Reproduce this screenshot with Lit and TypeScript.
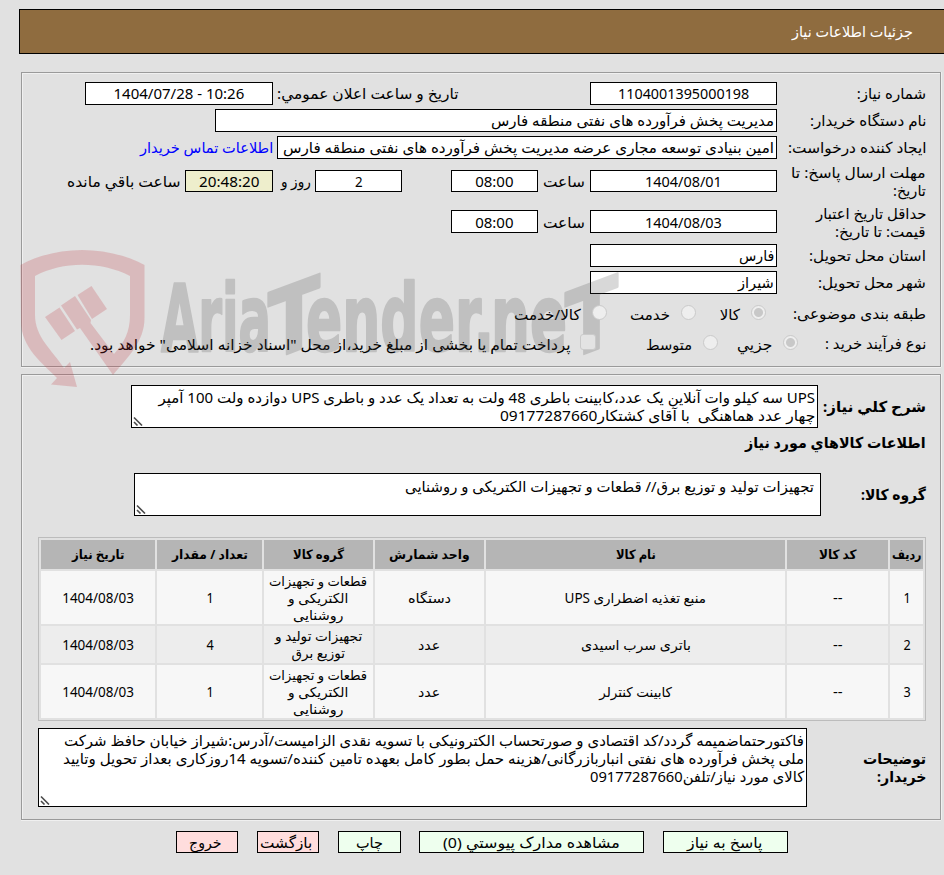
import { LitElement, html, css, svg } from "lit";
import { customElement, property, query } from "lit/decorators.js";

/** A single line of text whose advance is condensed or widened to a set measure. */
@customElement("fit-text")
class FitText extends LitElement {
  @property({ type: Number }) w = 0;
  @query("span") run!: HTMLSpanElement;

  static styles = css`
    :host {
      display: block;
      flex: none;
      white-space: pre;
      overflow: visible;
    }
    span {
      display: inline-block;
      transform-origin: 100% 50%;
    }
  `;

  updated() {
    const natural = this.run.offsetWidth;
    this.style.width = `${this.w}px`;
    if (natural) this.run.style.transform = `scaleX(${this.w / natural})`;
  }

  render() {
    return html`<span><slot></slot></span>`;
  }
}

const t = (w: number, text: string) => html`<fit-text w=${w}>${text}</fit-text>`;

interface Item {
  no: string;
  name: [number, string];
  unit: [number, string];
  group: [number, string][];
  qty: string;
}

const partsGroup: [number, string][] = [
  [98, "قطعات و تجهیزات"],
  [60, "الکتریکی و"],
  [51, "روشنایی"],
];

const items: Item[] = [
  { no: "1", name: [141, "منبع تغذیه اضطراری UPS"], unit: [43, "دستگاه"], group: partsGroup, qty: "1" },
  {
    no: "2",
    name: [110, "باتری سرب اسیدی"],
    unit: [22, "عدد"],
    group: [
      [87, "تجهیزات تولید و"],
      [53, "توزیع برق"],
    ],
    qty: "4",
  },
  { no: "3", name: [73, "کابینت کنترلر"], unit: [22, "عدد"], group: partsGroup, qty: "1" },
];

const headers: [number, string][] = [
  [30, "ردیف"],
  [38, "کد کالا"],
  [40, "نام کالا"],
  [81, "واحد شمارش"],
  [51, "گروه کالا"],
  [76, "تعداد / مقدار"],
  [52, "تاریخ نیاز"],
];

const grip = html`<svg class="grip" viewBox="0 0 10 10">
  <path d="M1 1.5 L9 9.5 M1 6 L4.5 9.5" />
</svg>`;

const watermark = svg`
  <g fill="#c0303c" fill-opacity=".22">
    <path fill-rule="evenodd" d="M20.5 265 C57 245 107 245 144.5 265 V318 C144.500 342 127 358 113 375
      L80 328 L77 329.500 L61 305.500 L75 296 L91 320 L90.500 323 L114 354 C124 343 130 332 130 315
      V276 C101 261 63 261 35 276 V315 C35 337 52 350 64 368 L70 362 L77 387 L51 384.500 L57 378
      C43 364 21 347 21 322 Z"/>
    <path d="M45 317 L59.500 307.500 L75 331 L61.500 340 Z"/>
    <path d="M77.500 295 L91.500 286 L107 309 L92 319 Z"/>
  </g>
  <g class="word">
    <text x="161" y="351" textLength="110" lengthAdjust="spacingAndGlyphs">Aria</text>
    <text transform="translate(268 361) skewY(-20.500)" textLength="52" lengthAdjust="spacingAndGlyphs">T</text>
    <text x="306" y="351" textLength="188" lengthAdjust="spacingAndGlyphs">ender.</text>
    <text x="491" y="351" textLength="76" lengthAdjust="spacingAndGlyphs">ne</text>
    <text transform="translate(565 361) skewY(-20.500)" textLength="53" lengthAdjust="spacingAndGlyphs">T</text>
  </g>`;

@customElement("app-root")
class AppRoot extends LitElement {
  static styles = css`
    :host {
      display: block;
      position: relative;
      box-sizing: border-box;
      width: 944px;
      height: 875px;
      overflow: hidden;
      background: #e1e1e1;
      color: #000;
      direction: rtl;
      font: 15px/18px "Noto Sans", "DejaVu Sans", sans-serif;
      padding: 9px 0 0;
    }
    * {
      box-sizing: border-box;
    }
    .title {
      display: flex;
      align-items: center;
      height: 45px;
      margin-left: 19px;
      padding: 0 31px 2px 0;
      background: #8f6c3f;
      border: 1px solid #000;
      border-right: 0;
      color: #fff;
    }
    .panel {
      width: 920px;
      margin-right: 3px;
      border: 1px solid #9a9a9a;
      box-shadow: inset 1px 1px #f0f0f0, 0 1px #f0f0f0, 1px 0 #f0f0f0;
      padding-right: 14px;
    }
    .need {
      height: 295px;
      margin-top: 18px;
      padding-top: 9px;
    }
    .goods {
      height: 446px;
      margin-top: 7px;
      padding-top: 10px;
    }
    .row {
      display: flex;
      align-items: center;
      height: 23px;
      margin-bottom: 4px;
    }
    .row fit-text {
      margin: -1px 0 1px;
    }
    .row.tall fit-text,
    .row.tall2 fit-text {
      margin: 0;
    }
    .tall {
      height: 36px;
    }
    .tall2 {
      height: 37px;
    }
    .opts {
      height: 22px;
      margin: 7px 0 0;
    }
    .opts2 {
      height: 22px;
      margin: 8px 0 0;
    }
    .row.opts fit-text,
    .row.opts2 fit-text {
      margin: 3px 0 0;
    }
    .row.opts .label fit-text,
    .row.opts2 .label fit-text {
      margin: 1px 0 0;
    }
    .label {
      flex: none;
      width: 149px;
    }
    .box {
      display: flex;
      flex: none;
      align-items: center;
      justify-content: center;
      width: 187px;
      height: 23px;
      background: #fff;
      border: 1px solid #000;
    }
    .tall .box {
      height: 22px;
    }
    .start {
      justify-content: flex-start;
      padding-right: 2px;
    }
    .w188 {
      width: 188px;
    }
    .w562 {
      width: 562px;
    }
    .w500 {
      width: 500px;
    }
    .w87 {
      width: 87px;
    }
    .w88 {
      width: 88px;
      background: #eeeecc;
    }
    .ltr {
      direction: ltr;
    }
    .g4 {
      margin-right: 4px;
    }
    .g5 {
      margin-right: 5px;
    }
    .g8 {
      margin-right: 8px;
    }
    .g9 {
      margin-right: 9px;
    }
    .g19 {
      margin-right: 19px;
    }
    .g49 {
      margin-right: 49px;
    }
    .g50 {
      margin-right: 50px;
    }
    .g131 {
      margin-right: 131px;
    }
    .link {
      color: #00f;
      margin-right: 4px;
    }
    .radio,
    .check {
      position: relative;
      z-index: 1;
      flex: none;
      width: 15px;
      height: 15px;
      border: 1px solid #cacaca;
      border-radius: 50%;
      background: #eeeeee;
    }
    .radio.on {
      background: radial-gradient(circle, #c8c8c8 4px, #eeeeee 5px);
    }
    .check {
      width: 16px;
      height: 16px;
      border-radius: 3px;
      background: #e3e3e3;
    }
    .first,
    .g11 {
      margin-right: 11px;
    }
    .g24 {
      margin-right: 24px;
    }
    .g23 {
      margin-right: 23px;
    }
    .back {
      margin-right: -21px;
    }
    .area {
      position: relative;
      flex: none;
      background: #fff;
      border: 1px solid #000;
      padding: 3px 2px 0 0;
    }
    .grip {
      position: absolute;
      left: 1px;
      bottom: 1px;
      width: 10px;
      height: 10px;
      fill: none;
      stroke: #4a4a4a;
      stroke-width: 1.6;
    }
    .bold {
      font-weight: 700;
    }
    .desc {
      height: 43px;
      margin: 0;
    }
    .desc .label {
      width: 108px;
    }
    .desc .area {
      width: 687px;
      height: 43px;
    }
    .heading {
      height: 18px;
      margin: 6px 0 21px;
    }
    .group {
      height: 43px;
      margin: 0;
    }
    .group .label {
      width: 105px;
    }
    .group .area {
      width: 687px;
      height: 43px;
      padding: 4px 6px 0 0;
    }
    .table {
      display: grid;
      grid-template-columns: 33px 101px 299px 109px 109px 105px 114px;
      grid-template-rows: 29px 53px 37px 53px;
      gap: 2px;
      width: 888px;
      height: 184px;
      margin-top: 21px;
      padding: 2px;
      border: 1px solid #bcbcbc;
      font-size: 13.5px;
      line-height: 17px;
    }
    .cell {
      display: flex;
      flex-direction: column;
      align-items: center;
      justify-content: center;
      background: #f7f7f7;
      padding-top: 1px;
    }
    .even {
      background: #ededed;
    }
    .th {
      padding: 0;
      background: #b5b5b5;
      font-weight: 700;
      font-size: 13px;
    }
    .note {
      height: 79px;
      margin: 7px 0 0;
    }
    .note .label {
      width: 119px;
    }
    .note .area {
      width: 769px;
      height: 79px;
    }
    .actions {
      display: flex;
      gap: 19px;
      margin-top: 11px;
      padding-right: 156px;
    }
    .btn {
      display: flex;
      align-items: center;
      justify-content: center;
      height: 22px;
      padding: 0;
      border: 1px solid #000;
      background: #eeffee;
      color: #000;
      font: inherit;
    }
    .b125 {
      width: 125px;
      padding-left: 3px;
    }
    .b225 {
      width: 225px;
      padding-left: 10px;
    }
    .b63 {
      width: 63px;
      margin-right: -1px;
    }
    .b62 {
      width: 62px;
      padding-right: 3px;
      background: #ffdddd;
    }
    .mark {
      position: absolute;
      left: 0;
      top: 0;
      width: 944px;
      height: 875px;
      pointer-events: none;
      direction: ltr;
    }
    .word {
      fill: #414141;
      stroke: #414141;
      stroke-width: 2.5;
      stroke-linejoin: round;
      opacity: 0.2;
      font: 700 93px "DejaVu Sans", sans-serif;
    }
  `;

  render() {
    return html`
      <div class="title">${t(121, "جزئیات اطلاعات نیاز")}</div>

      <div class="panel need">
        <div class="row">
          <div class="label">${t(69, "شماره نیاز:")}</div>
          <div class="box">${t(131, "1104001395000198")}</div>
          <div class="g131">${t(182, "تاریخ و ساعت اعلان عمومي:")}</div>
          <div class="box w188 g4 ltr">${t(131, "1404/07/28 - 10:26")}</div>
        </div>
        <div class="row">
          <div class="label">${t(116, "نام دستگاه خریدار:")}</div>
          <div class="box w562 start">${t(283, "مدیریت پخش فرآورده های نفتی منطقه فارس")}</div>
        </div>
        <div class="row">
          <div class="label">${t(138, "ایجاد کننده درخواست:")}</div>
          <div class="box w500 start">
            ${t(491, "امین بنیادی توسعه مجاری عرضه مدیریت پخش فرآورده های نفتی منطقه فارس")}
          </div>
          <div class="link">${t(133, "اطلاعات تماس خریدار")}</div>
        </div>
        <div class="row tall">
          <div class="label">${t(135, "مهلت ارسال پاسخ: تا")}${t(33, "تاریخ:")}</div>
          <div class="box">${t(77, "1404/08/01")}</div>
          <div class="g5">${t(42, "ساعت")}</div>
          <div class="box w87 g5">${t(38, "08:00")}</div>
          <div class="box w87 g49">${t(8, "2")}</div>
          <div class="g4">${t(30, "روز و")}</div>
          <div class="box w88 g8">${t(61, "20:48:20")}</div>
          <div class="g4">${t(114, "ساعت باقي مانده")}</div>
        </div>
        <div class="row tall2">
          <div class="label">${t(110, "حداقل تاریخ اعتبار")}${t(91, "قیمت: تا تاریخ:")}</div>
          <div class="box">${t(77, "1404/08/03")}</div>
          <div class="g5">${t(42, "ساعت")}</div>
          <div class="box w87 g5">${t(38, "08:00")}</div>
        </div>
        <div class="row">
          <div class="label">${t(117, "استان محل تحویل:")}</div>
          <div class="box start">${t(35, "فارس")}</div>
        </div>
        <div class="row">
          <div class="label">${t(108, "شهر محل تحویل:")}</div>
          <div class="box start">${t(36, "شیراز")}</div>
        </div>
        <div class="row opts">
          <div class="label">${t(133, "طبقه بندی موضوعی:")}</div>
          <span class="radio on first"></span>
          <div class="g11">${t(20, "کالا")}</div>
          <span class="radio g24"></span>
          <div class="g11">${t(40, "خدمت")}</div>
          <span class="radio g23"></span>
          <div class="g11">${t(67, "کالا/خدمت")}</div>
        </div>
        <div class="row opts2">
          <div class="label">${t(101, "نوع فرآیند خرید :")}</div>
          <span class="radio on back"></span>
          <div class="g11">${t(35, "جزيي")}</div>
          <span class="radio g19"></span>
          <div class="g11">${t(46, "متوسط")}</div>
          <span class="check g50"></span>
          <div class="g9">${t(481, 'پرداخت تمام یا بخشی از مبلغ خرید،از محل "اسناد خزانه اسلامی" خواهد بود.')}</div>
        </div>
      </div>

      <div class="panel goods">
        <div class="row desc">
          <div class="label bold">${t(103, "شرح کلي نیاز:")}</div>
          <div class="area">
            ${t(657, "UPS سه کیلو وات آنلاین یک عدد،کابینت باطری 48 ولت به تعداد یک عدد و باطری UPS دوازده ولت 100 آمپر")}
            ${t(315, "چهار عدد هماهنگی  با آقای کشتکار09177287660")} ${grip}
          </div>
        </div>
        <div class="row heading bold">${t(181, "اطلاعات کالاهاي مورد نیاز")}</div>
        <div class="row group">
          <div class="label bold">${t(65, "گروه کالا:")}</div>
          <div class="area">
            ${t(409, "تجهیزات تولید و توزیع برق// قطعات و تجهیزات الکتریکی و روشنایی")} ${grip}
          </div>
        </div>
        <div class="table">
          ${headers.map(([w, h]) => html`<div class="cell th">${t(w, h)}</div>`)}
          ${items.map((r, i) => {
            const c = i % 2 ? "cell even" : "cell";
            return html`
              <div class=${c}>${t(7.5, r.no)}</div>
              <div class=${c}>${t(10, "--")}</div>
              <div class=${c}>${t(...r.name)}</div>
              <div class=${c}>${t(...r.unit)}</div>
              <div class=${c}>${r.group.map((g) => t(...g))}</div>
              <div class=${c}>${t(7.5, r.qty)}</div>
              <div class=${c}>${t(72, "1404/08/03")}</div>
            `;
          })}
        </div>
        <div class="row note">
          <div class="label bold">${t(63, "توضیحات")}${t(49, "خریدار:")}</div>
          <div class="area">
            ${t(740, "فاکتورحتماضمیمه گردد/کد اقتصادی و صورتحساب الکترونیکی با تسویه نقدی الزامیست/آدرس:شیراز خیابان حافظ شرکت")}
            ${t(741, "ملی پخش فرآورده های نفتی انباربازرگانی/هزینه حمل بطور کامل بعهده تامین کننده/تسویه 14روزکاری بعداز تحویل وتایید")}
            ${t(214, "کالای مورد نیاز/تلفن09177287660")} ${grip}
          </div>
        </div>
      </div>

      <div class="actions">
        <button class="btn b125">${t(76, "پاسخ به نیاز")}</button>
        <button class="btn b225">${t(177, "مشاهده مدارک پیوستي (0)")}</button>
        <button class="btn b63">${t(27, "چاپ")}</button>
        <button class="btn b62">${t(52, "بازگشت")}</button>
        <button class="btn b62">${t(32, "خروج")}</button>
      </div>

      <svg class="mark" viewBox="0 0 944 875">${watermark}</svg>
    `;
  }
}
